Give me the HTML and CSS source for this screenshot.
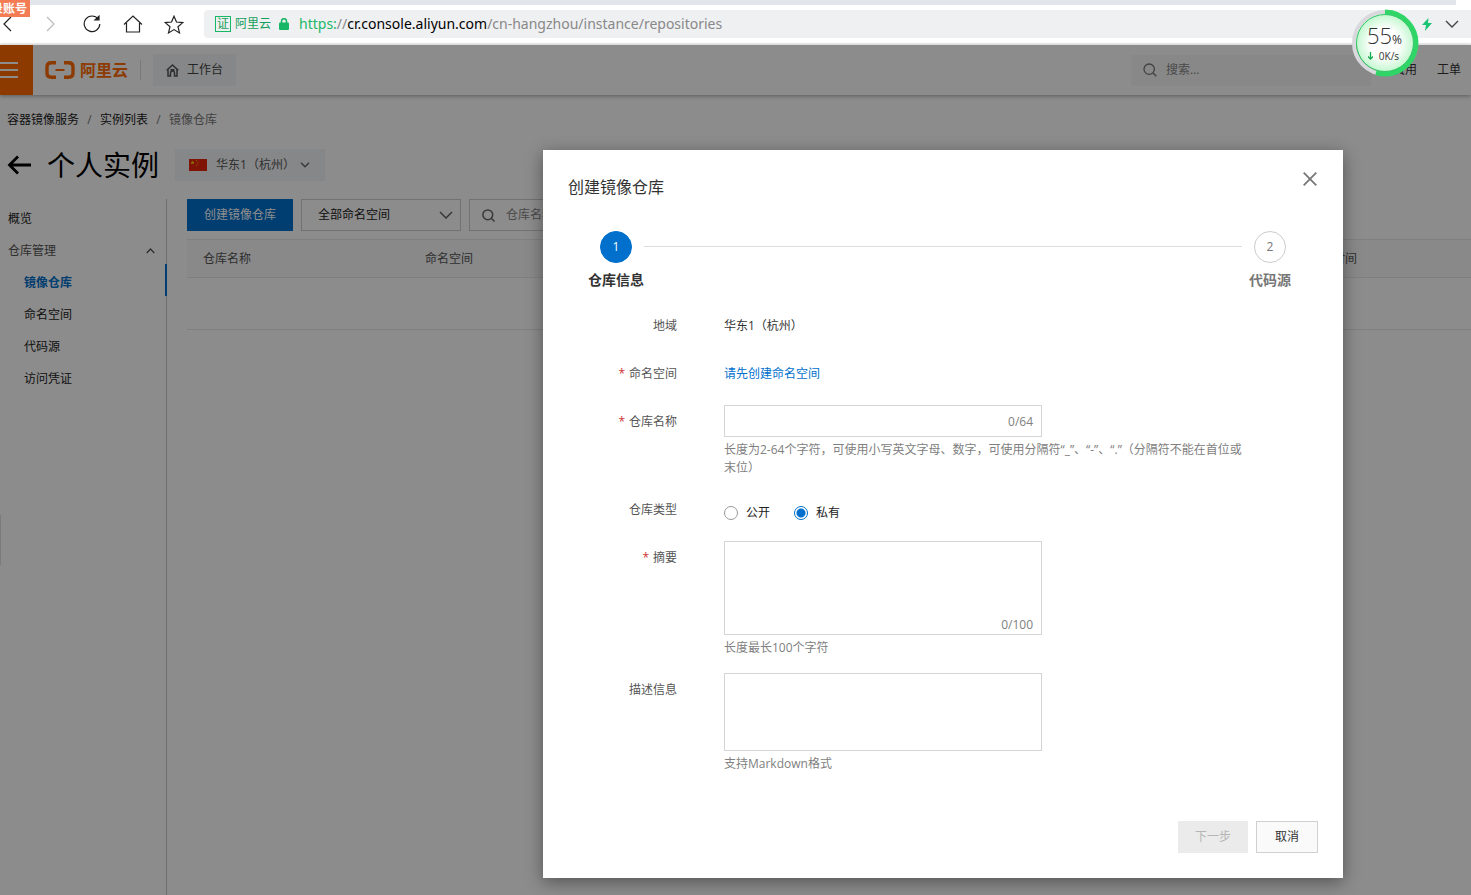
FILE: index.html
```html
<!DOCTYPE html>
<html lang="zh-CN">
<head>
<meta charset="utf-8">
<title>容器镜像服务</title>
<link rel="stylesheet" href="styles.css">
</head>
<body>
<header class="browser">
  <div class="tab-strip"></div>
  <div class="browser-bar">
    <nav class="browser-nav">
      <button class="nav-btn nav-back" aria-label="后退"><svg width="10" height="16" viewBox="0 0 10 16"><path d="M9 1 2 8l7 7"/></svg></button>
      <button class="nav-btn nav-forward" aria-label="前进"><svg width="10" height="16" viewBox="0 0 10 16"><path d="m1 1 7 7-7 7"/></svg></button>
      <button class="nav-btn" aria-label="刷新"><svg width="18" height="18" viewBox="0 0 18 18"><path d="M15.3 4.2A7.8 7.8 0 1 0 16.8 9"/><path d="M12 4.8h4V1.2z" fill="#222"/></svg></button>
      <button class="nav-btn" aria-label="主页"><svg width="20" height="18" viewBox="0 0 20 18"><path d="M1 9.5 10 1l9 8.500M3.500 8v9h13V8"/></svg></button>
      <button class="nav-btn" aria-label="收藏"><svg width="20" height="19" viewBox="0 0 20 19"><path d="m10 1.200 2.500 5.800 6.300.6-4.800 4.100 1.500 6.200-5.500-3.300-5.500 3.300 1.500-6.200L1.200 7.600l6.300-.6z"/></svg></button>
    </nav>
    <div class="address">
      <span class="cert">证</span>
      <span class="site">阿里云</span>
      <svg class="lock" width="10" height="12" viewBox="0 0 10 12"><rect x="0" y="4.500" width="10" height="7.500" rx="1" fill="#16b765"/><path d="M2.500 5V3.200a2.500 2.500 0 0 1 5 0V5" fill="none" stroke="#16b765" stroke-width="1.600"/></svg>
      <span class="url"><span class="scheme">https:</span>//<span class="host">cr.console.aliyun.com</span>/cn-hangzhou/instance/repositories</span>
      <span class="address-tools">
        <svg width="10" height="13" viewBox="0 0 10 13"><path d="M6.500 0 0 7h4L3 13l7-8H6z" fill="#16c474"/></svg>
        <svg width="14" height="8" viewBox="0 0 14 8"><path d="m1 1 6 6 6-6" fill="none" stroke="#444" stroke-width="1.400"/></svg>
      </span>
    </div>
  </div>
  <div class="account-tag"><span>登录账号</span></div>
</header>

<div class="app">
  <header class="topbar">
    <button class="menu-btn" aria-label="菜单"><i></i><i></i><i></i></button>
    <a class="logo" href="#"><svg width="30" height="18" viewBox="0 0 30 18" fill="none" stroke="#ff6a00"><path d="M11 1.800H6.500C3.500 1.800 2 3.500 2 6v6c0 2.500 1.500 4.200 4.500 4.200H11" stroke-width="3.400"/><path d="M19 1.800h4.500C26.500 1.800 28 3.500 28 6v6c0 2.500-1.500 4.200-4.500 4.200H19" stroke-width="3.400"/><path d="M10.500 9h9" stroke-width="2"/></svg>阿里云</a>
    <span class="topbar-rule"></span>
    <a class="workbench" href="#"><svg width="13" height="13" viewBox="0 0 13 13" fill="none" stroke="#555" stroke-width="1.500"><path d="M.7 6.200 6.500 1l5.800 5.200M2 5.500V12h2.500V9a2 2 0 0 1 4 0v3H11V5.500M4.500 5.700h4"/></svg>工作台</a>
    <label class="global-search"><svg width="14" height="14" viewBox="0 0 14 14" fill="none" stroke="#777" stroke-width="1.300"><circle cx="6.200" cy="6.200" r="5.200"/><path d="m10 10 3.300 3.300"/></svg><input type="text" placeholder="搜索..." aria-label="搜索"></label>
    <nav class="topbar-links"><a href="#">费用</a><a href="#">工单</a></nav>
  </header>

  <nav class="breadcrumb"><a href="#">容器镜像服务</a><span>/</span><a href="#">实例列表</a><span>/</span><em>镜像仓库</em></nav>

  <div class="heading">
    <button class="back" aria-label="返回"><svg width="25" height="20" viewBox="0 0 25 20" fill="none" stroke="#000" stroke-width="2.800"><path d="M24 10H3M11 1.500 2.500 10l8.500 8.500"/></svg></button>
    <h1>个人实例</h1>
    <button class="region"><svg width="18" height="12" viewBox="0 0 18 12"><rect width="18" height="12" fill="#e8240c"/><path d="m3.500 1.500.6 1.500h1.500l-1.200 1 .5 1.600-1.400-1-1.400 1 .5-1.600-1.200-1h1.500z" fill="#ffd500"/><path d="M7 1h1v1H7zM8.500 2.500h1v1h-1zM8.500 4.500h1v1h-1zM7 6h1v1H7z" fill="#f9a000"/></svg><span>华东1（杭州）</span><svg width="10" height="6" viewBox="0 0 10 6" fill="none" stroke="#666" stroke-width="1.400"><path d="m1 .7 4 4 4-4"/></svg></button>
  </div>

  <div class="workspace">
    <nav class="sidebar">
      <a href="#">概览</a>
      <button class="group">仓库管理<svg width="9" height="6" viewBox="0 0 9 6" fill="none" stroke="#555" stroke-width="1.300"><path d="m.7 5 3.800-4 3.800 4"/></svg></button>
      <a class="sub current" href="#">镜像仓库</a>
      <a class="sub" href="#">命名空间</a>
      <a class="sub" href="#">代码源</a>
      <a class="sub" href="#">访问凭证</a>
    </nav>
    <main class="content">
      <div class="tools">
        <button class="create">创建镜像仓库</button>
        <div class="select"><select aria-label="命名空间"><option>全部命名空间</option></select><svg width="14" height="8" viewBox="0 0 14 8" fill="none" stroke="#666" stroke-width="1.500"><path d="m1 1 6 6 6-6"/></svg></div>
        <label class="repo-search"><svg width="13" height="13" viewBox="0 0 13 13" fill="none" stroke="#666" stroke-width="1.500"><circle cx="5.800" cy="5.800" r="4.900"/><path d="m9.300 9.300 3.200 3.200"/></svg><input type="text" placeholder="仓库名称" aria-label="仓库名称"></label>
      </div>
      <table class="repos">
        <thead><tr><th class="col-name">仓库名称</th><th>命名空间</th><th class="col-time">创建时间</th></tr></thead>
        <tbody><tr><td colspan="3"></td></tr></tbody>
      </table>
    </main>
  </div>
  <div class="edge-handle"></div>

  <div class="overlay">
    <section class="dialog" role="dialog" aria-labelledby="dialog-title">
      <button class="close" aria-label="关闭"><svg width="14" height="14" viewBox="0 0 14 14" fill="none" stroke="#777" stroke-width="1.800"><path d="m.7.7 12.600 12.600M13.300.7.7 13.300"/></svg></button>
      <h2 id="dialog-title">创建镜像仓库</h2>
      <ol class="steps">
        <li class="step active"><span class="step-no">1</span><span class="step-name">仓库信息</span></li>
        <li class="step-line" aria-hidden="true"></li>
        <li class="step"><span class="step-no">2</span><span class="step-name">代码源</span></li>
      </ol>
      <form class="form">
        <div class="row"><span class="label">地域</span><div class="field"><span class="value">华东1（杭州）</span></div></div>
        <div class="row"><span class="label required">命名空间</span><div class="field"><a class="value link" href="#">请先创建命名空间</a></div></div>
        <div class="row"><label class="label required" for="name">仓库名称</label><div class="field"><div class="box"><input id="name" type="text"><span class="count">0/64</span></div><p class="help">长度为2-64个字符，可使用小写英文字母、数字，可使用分隔符“_”、“-”、“.”（分隔符不能在首位或末位）</p></div></div>
        <div class="row"><span class="label">仓库类型</span><div class="field radios"><label><input type="radio" name="type">公开</label><label><input type="radio" name="type" checked>私有</label></div></div>
        <div class="row"><label class="label required" for="summary">摘要</label><div class="field"><div class="box box-summary"><textarea id="summary"></textarea><span class="count">0/100</span></div><p class="help">长度最长100个字符</p></div></div>
        <div class="row"><label class="label" for="desc">描述信息</label><div class="field"><div class="box box-desc"><textarea id="desc"></textarea></div><p class="help">支持Markdown格式</p></div></div>
      </form>
      <footer class="actions"><button class="next" disabled>下一步</button><button class="cancel">取消</button></footer>
    </section>
  </div>
</div>

<div class="speed">
  <svg class="speed-ring" width="70" height="70" viewBox="0 0 70 70">
    <defs><radialGradient id="glow"><stop offset=".5" stop-color="#fff"/><stop offset="1" stop-color="#c4f7d0"/></radialGradient></defs>
    <circle cx="34" cy="35" r="31" fill="none" stroke="#d9d9dd" stroke-width="4"/>
    <path d="M34 4a31 31 0 1 1-9 60.700" fill="none" stroke="#2fd566" stroke-width="5"/>
    <circle cx="34" cy="35" r="28.500" fill="url(#glow)" stroke="#2cc963" stroke-width="1"/>
  </svg>
  <div class="speed-text">
    <div class="speed-pct">55<small>%</small></div>
    <div class="speed-rate"><svg width="5" height="8" viewBox="0 0 5 8"><path d="M2.500 0v7M0 4.500 2.500 7 5 4.500" fill="none" stroke="#1cab55" stroke-width="1.300"/></svg>0K/s</div>
  </div>
</div>
</body>
</html>
```

FILE: styles.css
```css
* { box-sizing: border-box; }
body {
  margin: 0;
  min-height: 100vh;
  display: flex;
  flex-direction: column;
  position: relative;
  overflow: hidden;
  font: 12px/18px "Open Sans", "Noto Sans CJK SC", sans-serif;
  text-spacing-trim: space-all;
  color: #333;
}
button, input, select, textarea { font: inherit; color: inherit; margin: 0; }
button { border: 0; padding: 0; background: none; }
a { color: inherit; text-decoration: none; }
svg { flex: none; display: block; }

/* Browser chrome */
.browser { position: relative; background: #fff; }
.tab-strip { height: 5px; margin-right: 15px; background: #e3e5ed; }
.browser-bar { display: flex; height: 40px; padding-top: 5px; border-bottom: 2px solid #f0f0f0; }
.browser-nav { display: flex; align-items: center; width: 204px; padding-left: 2px; height: 28px; }
.nav-btn { width: 41px; display: flex; justify-content: center; }
.nav-btn svg { fill: none; stroke: #222; stroke-width: 1.2; }
.nav-back { width: 10px; }
.nav-forward { width: 10px; margin: 0 15px 0 34px; }
.nav-forward svg { stroke: #bbb; }
.address { flex: 1; display: flex; align-items: center; height: 28px; padding: 0 12px 0 11px; background: #eff0f2; border-radius: 4px 0 0 4px; white-space: nowrap; }
.cert { width: 16px; height: 16px; border: 1px solid #16b765; color: #16a05a; line-height: 14px; text-align: center; }
.site { margin-left: 4px; color: #16a05a; }
.lock { margin: 0 10px 0 8px; }
.url { font-family: "Noto Sans", sans-serif; font-size: 14px; line-height: 20px; color: #888; }
.scheme { color: #21b868; }
.host { color: #000; }
.address-tools { margin-left: auto; display: flex; align-items: center; gap: 13px; }
.account-tag { position: absolute; left: 0; top: 0; width: 30px; height: 17px; overflow: hidden; display: flex; justify-content: flex-end; padding-right: 3px; background: #f47c55; color: #fff; font-weight: bold; white-space: nowrap; }

/* Console page */
.app { position: relative; flex: 1; display: flex; flex-direction: column; background: #fff; }
.topbar { display: flex; align-items: center; height: 50px; box-shadow: 0 1px 4px rgba(0, 0, 0, .35); white-space: nowrap; }
.menu-btn { width: 33px; height: 50px; background: #ff6a00; display: flex; flex-direction: column; justify-content: center; gap: 5px; }
.menu-btn i { width: 18px; height: 2px; background: #fff; }
.logo { display: flex; align-items: center; gap: 5px; margin-left: 12px; font-size: 16px; font-weight: bold; color: #ff6a00; }
.topbar-rule { width: 1px; height: 20px; margin: 0 12px; background: #ddd; }
.workbench { display: flex; align-items: center; gap: 8px; height: 32px; padding: 0 13px; background: #f5f6f8; color: #444; }
.global-search { display: flex; align-items: center; gap: 9px; width: 240px; height: 31px; margin-left: auto; padding-left: 12px; background: #f7f7f7; color: #888; }
.global-search input, .repo-search input { flex: 1; min-width: 0; border: 0; padding: 0; background: none; outline: 0; }
::placeholder { color: #888; opacity: 1; }
.topbar-links { display: flex; gap: 20px; margin: 0 10px 0 22px; }
.breadcrumb { display: flex; padding: 16px 7px 0; color: #222; }
.breadcrumb span { width: 21px; text-align: center; color: #777; }
.breadcrumb em { font-style: normal; color: #777; }
.heading { display: flex; align-items: center; height: 32px; margin-top: 20px; padding-left: 7px; }
.heading h1 { margin: 0 16px 0 15px; font-size: 28px; line-height: 32px; font-weight: normal; color: #000; }
.region { display: flex; align-items: center; height: 32px; padding: 0 15px 0 14px; background: #f5f6f8; color: #555; }
.region span { margin: 0 5px 0 9px; }
.workspace { flex: 1; display: flex; margin-top: 18px; }
.sidebar { width: 167px; padding-top: 1px; border-right: 1px solid #c8c8c8; color: #222; }
.sidebar a, .group { display: flex; align-items: center; width: 100%; height: 32px; padding: 6px 0 0 8px; }
.sidebar .group { justify-content: space-between; padding-right: 11px; color: #555; }
.sidebar .sub { padding-left: 24px; }
.sidebar .current { width: auto; margin-right: -1px; border-right: 2px solid #0070cc; color: #0070cc; font-weight: bold; }
.content { flex: 1; padding-left: 20px; min-width: 0; }
.tools { display: flex; gap: 8px; }
.create { height: 32px; padding: 0 17px; background: #0070cc; color: #fff; }
.select { position: relative; width: 160px; }
.select select { width: 100%; height: 32px; padding: 0 16px; appearance: none; border: 1px solid #d0d0d0; border-radius: 0; background: #fff; color: #222; }
.select svg { position: absolute; right: 8px; top: 12px; pointer-events: none; }
.repo-search { display: flex; align-items: center; gap: 11px; width: 320px; height: 32px; padding: 0 12px; border: 1px solid #d0d0d0; }
.repos { width: 100%; margin-top: 8px; table-layout: fixed; border-collapse: collapse; }
.repos th { height: 38px; padding: 0 16px; text-align: left; font-weight: normal; color: #555; background: #f9f9f9; border: solid #e8e8e8; border-width: 1px 0; }
.repos td { height: 52px; border-bottom: 1px solid #e8e8e8; }
.col-name { width: 222px; }
.repos .col-time { width: 178px; }
.edge-handle { position: absolute; left: 0; top: 470px; width: 1px; height: 50px; background: #e0e0e0; }

/* Dialog */
.overlay { position: absolute; inset: 0; display: flex; align-items: flex-start; justify-content: flex-end; padding: 105px 128px 0 0; background: rgba(0, 0, 0, .45); }
.dialog { position: relative; width: 800px; padding: 25px; background: #fff; box-shadow: 0 4px 16px rgba(0, 0, 0, .4); }
.dialog h2 { margin: 0; font-size: 16px; line-height: 24px; font-weight: normal; }
.close { position: absolute; right: 26px; top: 22px; }
.steps { display: flex; margin: 32px 20px 20px; padding: 0; list-style: none; }
.step { width: 56px; display: flex; flex-direction: column; align-items: center; gap: 8px; color: #777; }
.step-no { width: 32px; height: 32px; border: 1px solid #ccc; border-radius: 50%; line-height: 30px; text-align: center; }
.step-name { font-size: 14px; font-weight: bold; }
.step.active { color: #333; }
.active .step-no { background: #0070cc; border-color: #0070cc; color: #fff; }
.step-line { flex: 1; height: 1px; margin-top: 15px; background: #ddd; }
.form { display: flex; flex-direction: column; gap: 16px; }
.row { display: flex; gap: 47px; }
.label { width: 109px; height: 32px; line-height: 34px; text-align: right; color: #555; }
.required::before { content: "*"; margin-right: 4px; color: #c33; }
.field { flex: 1; max-width: 523px; }
.value { display: block; height: 32px; line-height: 34px; }
.link { color: #0070cc; }
.box { position: relative; width: 318px; height: 32px; }
.box input, .box textarea { display: block; width: 100%; height: 100%; padding: 0 8px; border: 1px solid #d5d5d5; border-radius: 0; background: #fff; resize: none; }
.box-summary { height: 94px; }
.box-desc { height: 78px; }
.count { position: absolute; right: 9px; top: 8px; color: #808080; }
.box-summary .count { top: auto; bottom: 1px; }
.help { margin: 4px 0 0; color: #808080; }
.radios { display: flex; gap: 24px; padding-top: 8px; height: 32px; color: #222; }
.radios label { display: flex; align-items: center; gap: 8px; height: 24px; }
.radios input { appearance: none; width: 14px; height: 14px; border: 1px solid #999; border-radius: 50%; background: #fff; }
.radios input:checked { border-color: #0070cc; background: radial-gradient(circle, #0070cc 4px, #fff 5px); }
.actions { display: flex; justify-content: flex-end; gap: 8px; margin-top: 48px; }
.actions button { height: 32px; border: 1px solid #d0d0d0; }
.actions .next { width: 70px; background: #ebebeb; border-color: #ebebeb; color: #b5b5b5; }
.actions .cancel { width: 62px; background: #fafafa; }

/* Floating network meter */
.speed { position: absolute; right: 50px; top: 8px; width: 70px; height: 70px; }
.speed-ring { position: absolute; inset: 0; }
.speed-text { position: relative; padding: 15px 3px 0 0; text-align: center; color: #333; }
.speed-pct { height: 24px; font-size: 22px; font-weight: 300; line-height: 24px; }
.speed-pct small { font-size: 12px; font-weight: normal; line-height: 12px; }
.speed-rate { display: flex; align-items: center; justify-content: center; gap: 6px; padding-right: 2px; font-size: 10px; line-height: 18px; }
```
